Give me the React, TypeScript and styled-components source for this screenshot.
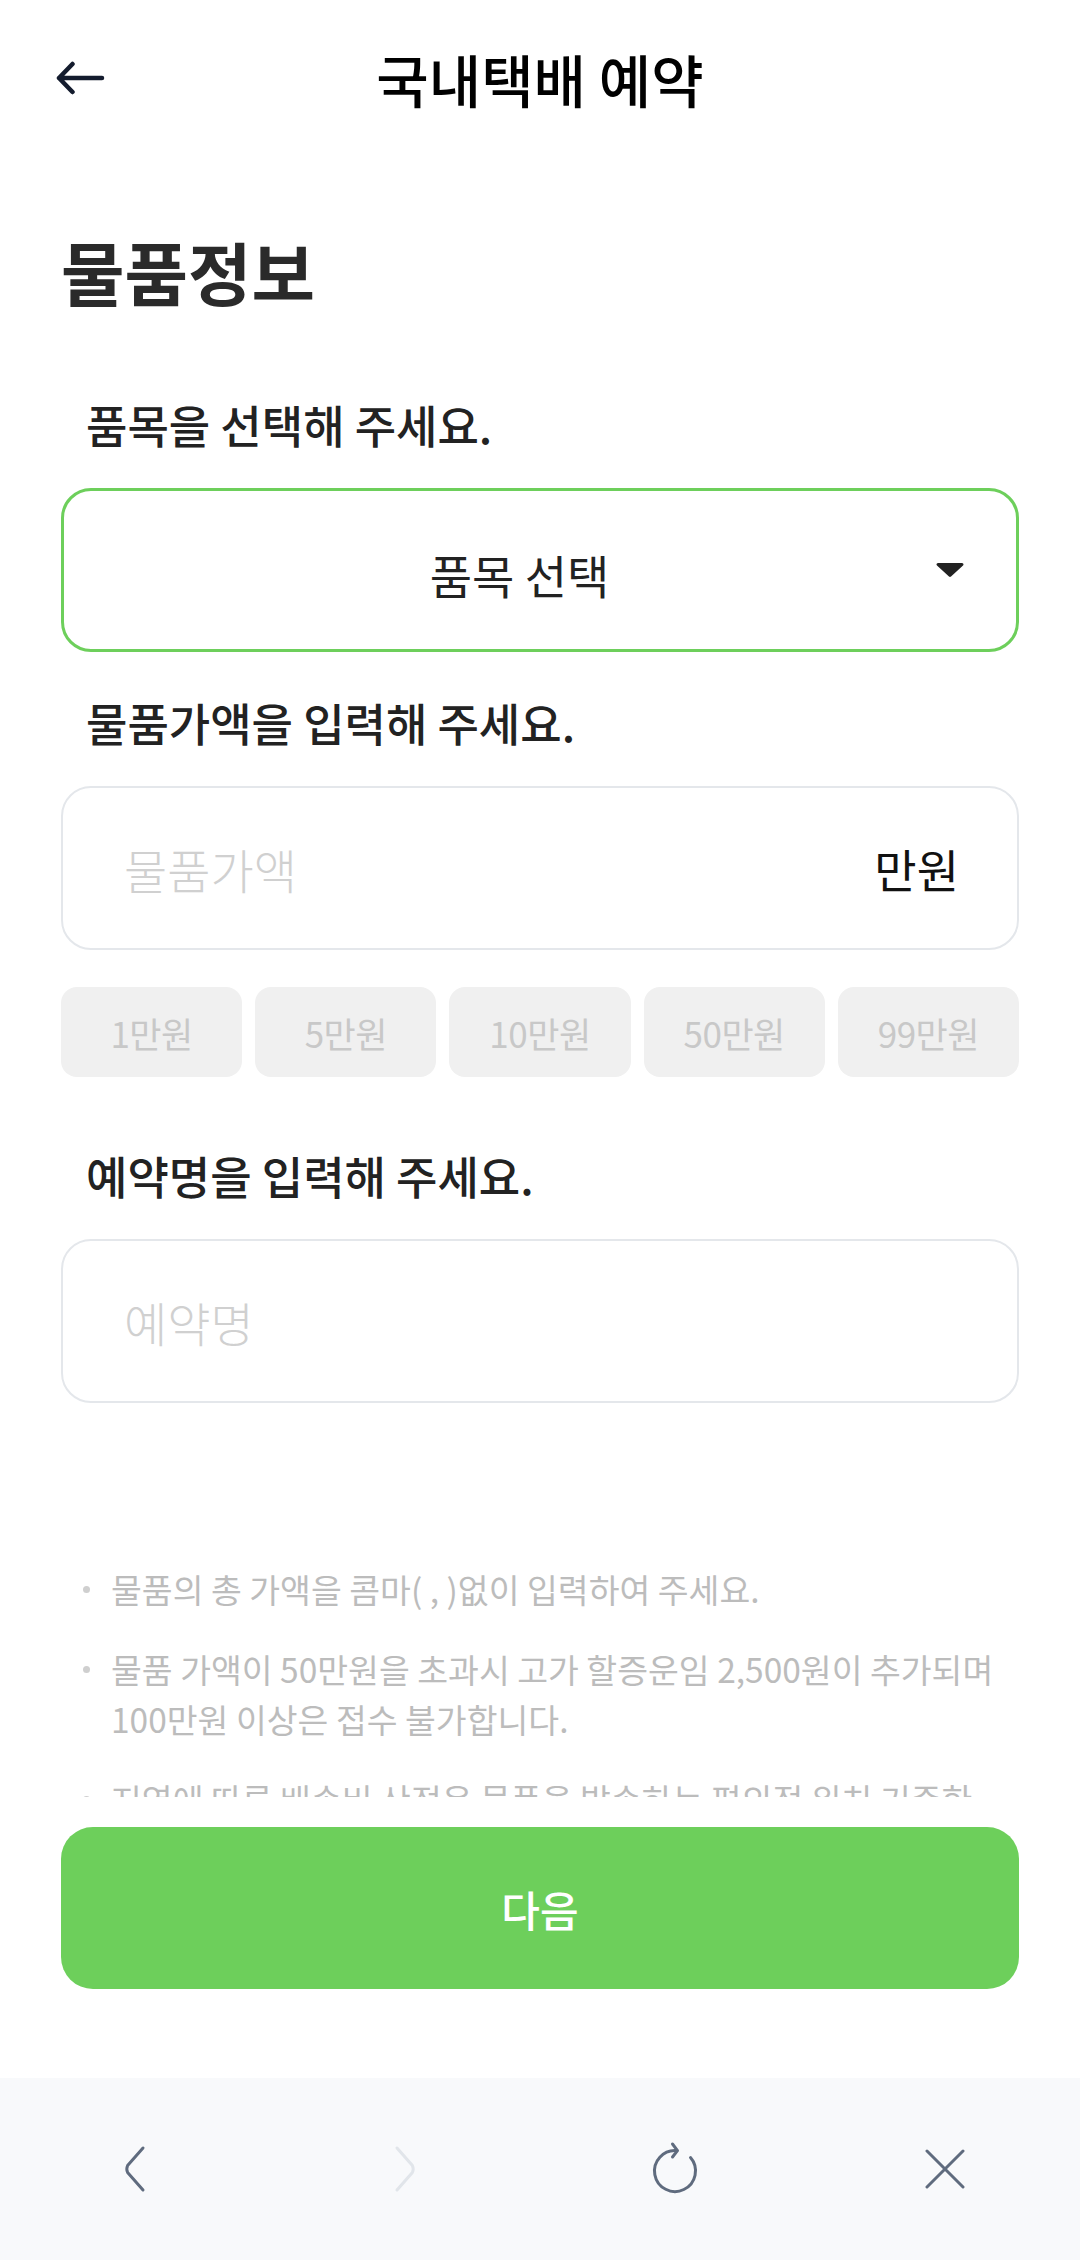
import React from 'react'
import styled, { createGlobalStyle } from 'styled-components'

const GREEN = '#6dcf5b'

const GlobalStyle = createGlobalStyle`
  html, body {
    margin: 0;
    padding: 0;
    background: #fff;
  }
  body {
    font-family: 'Noto Sans CJK KR', 'Noto Sans', sans-serif;
    -webkit-font-smoothing: antialiased;
    word-break: keep-all;
  }
  * {
    box-sizing: border-box;
  }
`

const Page = styled.div`
  display: flex;
  flex-direction: column;
  width: 1080px;
  height: 2260px;
  background: #fff;
`

const Header = styled.header`
  display: grid;
  grid-template-columns: 1fr auto 1fr;
  align-items: center;
  height: 156px;
  flex-shrink: 0;
`

const BackButton = styled.button`
  justify-self: start;
  display: flex;
  margin-left: 55px;
  padding: 0;
  border: 0;
  background: none;
  color: #141c2e;
`

const Title = styled.h1`
  margin: 0;
  font-size: 57px;
  line-height: 1;
  font-weight: 500;
  color: #000;
`

const Scroll = styled.main`
  flex: 1;
  min-height: 0;
  overflow: hidden;
  padding: 0 61px;
`

const SectionTitle = styled.h2`
  margin: 75px 0 0;
  font-size: 69px;
  line-height: 80px;
  font-weight: 600;
  color: #2a2a2a;
`

const Label = styled.h3<{ $gap: number }>`
  margin: ${(p) => p.$gap}px 0 35px;
  padding-left: 25px;
  font-size: 45px;
  line-height: 56px;
  font-weight: 500;
  color: #222;
`

const SelectBox = styled.div`
  display: flex;
  align-items: center;
  height: 164px;
  padding: 0 51px 0 40px;
  border: 3px solid ${GREEN};
  border-radius: 30px;
`

const SelectText = styled.span`
  flex: 1;
  padding-top: 8px;
  text-align: center;
  font-size: 46px;
  line-height: 56px;
  color: #222;
`

const InputBox = styled.label`
  display: flex;
  align-items: center;
  height: 164px;
  padding: 0 58px 0 61px;
  border: 2px solid #e4e7eb;
  border-radius: 30px;
`

const TextInput = styled.input`
  flex: 1;
  min-width: 0;
  padding: 0;
  border: 0;
  outline: none;
  background: transparent;
  font-family: inherit;
  font-size: 47px;
  font-weight: 300;
  color: #222;

  &::placeholder {
    color: #d0d0d0;
  }
`

const Unit = styled.span`
  font-size: 46px;
  color: #111;
`

const ChipRow = styled.div`
  display: grid;
  grid-template-columns: repeat(5, 1fr);
  gap: 13px;
  margin-top: 37px;
`

const Chip = styled.button`
  height: 90px;
  padding: 0;
  border: 0;
  border-radius: 16px;
  background: #f0f0f0;
  font-family: inherit;
  font-size: 35px;
  letter-spacing: -0.5px;
  color: #c8c8c8;
`

const Notes = styled.ul`
  display: flex;
  flex-direction: column;
  gap: 30px;
  margin: 161px 0 0;
  padding: 0;
  list-style: none;
`

const Note = styled.li`
  display: flex;
  padding-left: 22px;
  font-size: 33.5px;
  line-height: 50px;
  color: #bcbcbc;
`

const Bullet = styled.span`
  display: flex;
  align-items: center;
  flex-shrink: 0;
  width: 28px;
  height: 50px;

  &::before {
    content: '';
    width: 7px;
    height: 7px;
    border-radius: 50%;
    background: #cfcfcf;
  }
`

const Footer = styled.footer`
  flex-shrink: 0;
  padding: 30px 61px 89px;
`

const NextButton = styled.button`
  width: 100%;
  height: 162px;
  border: 0;
  border-radius: 32px;
  background: ${GREEN};
  font-family: inherit;
  font-size: 42px;
  font-weight: 500;
  color: #fff;
`

const BottomNav = styled.nav`
  display: grid;
  grid-template-columns: repeat(4, 1fr);
  align-items: center;
  justify-items: center;
  height: 182px;
  flex-shrink: 0;
  background: #f8f9fb;
`

const NavButton = styled.button<{ $off?: boolean }>`
  display: flex;
  padding: 0;
  border: 0;
  background: none;
  color: ${(p) => (p.$off ? '#e1e5ea' : '#5f6b7e')};
`

const notes = [
  '물품의 총 가액을 콤마( , )없이 입력하여 주세요.',
  '물품 가액이 50만원을 초과시 고가 할증운임 2,500원이 추가되며 100만원 이상은 접수 불가합니다.',
  '지역에 따른 배송비 산정은 물품을 발송하는 편의점 위치 기준한 요금입니다.',
]

const amounts = ['1만원', '5만원', '10만원', '50만원', '99만원']

export default function App() {
  return (
    <Page>
      <GlobalStyle />
      <Header>
        <BackButton type="button" aria-label="뒤로">
          <svg width="50" height="34" viewBox="0 0 50 34" fill="none" stroke="currentColor" strokeWidth="4.5" strokeLinecap="round" strokeLinejoin="round">
            <path d="M47 17H4M4 17L17.5 3M4 17l13.5 14" />
          </svg>
        </BackButton>
        <Title>국내택배 예약</Title>
        <div />
      </Header>

      <Scroll>
        <SectionTitle>물품정보</SectionTitle>

        <Label $gap={86}>품목을 선택해 주세요.</Label>
        <SelectBox>
          <SelectText>품목 선택</SelectText>
          <svg width="30" height="16" viewBox="0 0 30 16">
            <polygon points="3,2.5 27,2.5 15,13.5" fill="#222" stroke="#222" strokeWidth="3" strokeLinejoin="round" />
          </svg>
        </SelectBox>

        <Label $gap={43}>물품가액을 입력해 주세요.</Label>
        <InputBox>
          <TextInput placeholder="물품가액" inputMode="numeric" />
          <Unit>만원</Unit>
        </InputBox>
        <ChipRow>
          {amounts.map((a) => (
            <Chip key={a} type="button">
              {a}
            </Chip>
          ))}
        </ChipRow>

        <Label $gap={71}>예약명을 입력해 주세요.</Label>
        <InputBox>
          <TextInput placeholder="예약명" />
        </InputBox>

        <Notes>
          {notes.map((n) => (
            <Note key={n}>
              <Bullet />
              <span>{n}</span>
            </Note>
          ))}
        </Notes>
      </Scroll>

      <Footer>
        <NextButton type="button">다음</NextButton>
      </Footer>

      <BottomNav>
        <NavButton type="button" aria-label="이전">
          <svg width="24" height="48" viewBox="0 0 24 48" fill="none" stroke="currentColor" strokeWidth="3" strokeLinecap="round" strokeLinejoin="round">
            <path d="M20 3L4.6 20.5Q3 24 4.6 27.5L20 45" />
          </svg>
        </NavButton>
        <NavButton type="button" $off aria-label="다음">
          <svg width="24" height="48" viewBox="0 0 24 48" fill="none" stroke="currentColor" strokeWidth="3" strokeLinecap="round" strokeLinejoin="round">
            <path d="M4 3l15.4 17.5Q21 24 19.4 27.5L4 45" />
          </svg>
        </NavButton>
        <NavButton type="button" aria-label="새로고침">
          <svg width="56" height="56" viewBox="0 0 56 56" fill="none" stroke="currentColor" strokeWidth="3" strokeLinecap="round" strokeLinejoin="round">
            <path d="M43.5 16.6A20.5 20.5 0 1 1 29.8 9.6" />
            <path d="M25.5 3l5 6.6-5 6.4" />
          </svg>
        </NavButton>
        <NavButton type="button" aria-label="닫기">
          <svg width="40" height="40" viewBox="0 0 40 40" fill="none" stroke="currentColor" strokeWidth="3" strokeLinecap="round">
            <path d="M2 2l36 36M38 2L2 38" />
          </svg>
        </NavButton>
      </BottomNav>
    </Page>
  )
}
